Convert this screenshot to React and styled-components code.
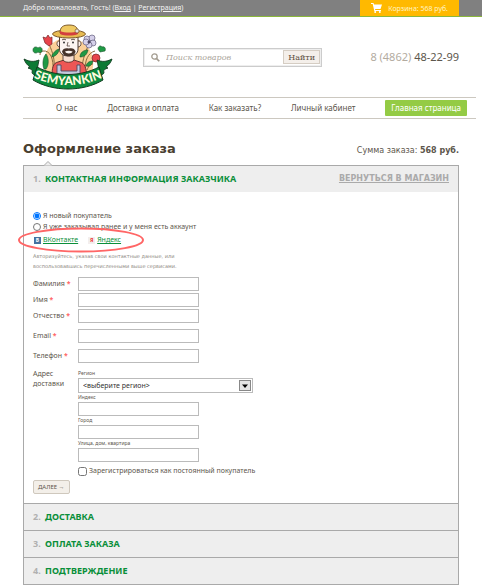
import React, { useState } from 'react';
import styled, { createGlobalStyle } from 'styled-components';

const menu = ['О нас', 'Доставка и оплата', 'Как заказать?', 'Личный кабинет'];

const person = [
  { id: 'surname', label: 'Фамилия' },
  { id: 'name', label: 'Имя' },
  { id: 'patronymic', label: 'Отчество' },
  { id: 'email', label: 'Email', spaced: true },
  { id: 'phone', label: 'Телефон', spaced: true },
];

const address = [
  { id: 'zip', label: 'Индекс' },
  { id: 'city', label: 'Город' },
  { id: 'street', label: 'Улица, дом, квартира' },
];

const nextSteps = ['Доставка', 'Оплата заказа', 'Подтверждение'];

function Logo() {
  return (
    <LogoSvg viewBox="0 0 90 66" role="img" aria-label="Semyankin">
      <path d="M22 48C18 30 27 14 45 14s29 16 24 34l-8 6H30z" fill="#fbcf98" />
      <g fill="none" stroke="#8a6a3c" strokeWidth="1">
        <path d="M31 46C32 36 30 29 26 20M30 47c1-12-3-21-10-20-2 0-3 2-3 4" />
        <path d="M59 44c1-10 3-15 7-24M62 46c0-10 3-17 10-19M64 46c2-5 4-6 6-6" />
      </g>
      <g fill="#1f9a45" stroke="#19532a" strokeWidth=".6">
        <path d="M10 26c0-3 3-4 5-2 2-2 5 0 4 3 0 2-3 2-4 1-2 2-5 1-5-2z" />
        <path d="M21 45c-2-5-1-12 2-15 3 4 3 11 0 15z" />
        <path d="M57 33c0-4 3-7 8-7-1 5-4 7-8 7zM63 42c1-4 4-5 7-5-1 4-3 6-7 5z" />
        <path d="M75 25c0-3 3-4 4-2 3-1 4 2 3 4l-5 1z" />
        <path d="M29 31c3-4 4-5 7-6 0 4-3 7-7 8z" />
      </g>
      <path d="M20 13l3 1 2-3 2 3 2-1v7l-3 2-4-3z" fill="#e8444a" stroke="#74272a" strokeWidth=".7" />
      <g fill="#d5d0ea" stroke="#635d7c" strokeWidth=".7">
        <circle cx="64" cy="15" r="3" />
        <circle cx="69" cy="14" r="3" />
        <circle cx="70" cy="19" r="3" />
        <circle cx="66" cy="21" r="3" />
        <circle cx="63" cy="18" r="3" />
      </g>
      <circle cx="66" cy="18" r="1.5" fill="#4c445e" />
      <circle cx="73" cy="34" r="4" fill="#e8444a" stroke="#74272a" strokeWidth=".7" />
      <path d="M29 52c0-8 1-13 6-14l6-2h10l6 2c5 1 6 6 7 14z" fill="#ed5755" stroke="#5b2d2a" strokeWidth=".9" />
      <path d="M34 41h4v6h16v-6h3v16H34z" fill="#c5c8dd" stroke="#4a4862" strokeWidth=".9" />
      <path d="M40 28h11v8c-2 3-9 3-11 0z" fill="#f7ddd0" stroke="#3d2b22" strokeWidth=".8" />
      <path d="M37 17c-4-1-4 6 0 6M55 17c4-1 4 6 0 6" fill="#fdeee6" stroke="#3d2b22" strokeWidth=".8" />
      <path d="M36.500 12h18.500v13c0 5-4 7-9.200 7s-9.300-2-9.300-7z" fill="#fdf5f1" stroke="#3d2b22" strokeWidth=".9" />
      <path d="M45.800 24.500c-3-1-6 0-6.800 3 1 3.500 3.500 4.800 6.800 4.800s5.800-1.300 6.800-4.800c-.8-3-3.800-4-6.800-3z" fill="#46332a" />
      <path d="M42 27.500c2-1 5.600-1 7.600 0-.8 2.600-6.800 2.600-7.600 0z" fill="#fdf5f1" />
      <path d="M45 18l-1 4h3" fill="none" stroke="#3d2b22" strokeWidth=".7" />
      <path d="M39 16c1-1 3-1 4 0M48 16c1-1 3-1 4 0" fill="none" stroke="#3d2b22" strokeWidth=".8" />
      <circle cx="41" cy="18.500" r=".9" fill="#222" />
      <circle cx="50" cy="18.500" r=".9" fill="#222" />
      <ellipse cx="46" cy="10" rx="16.500" ry="4" fill="#e7bb52" stroke="#6f4c1f" strokeWidth=".9" />
      <path d="M37 9c0-6 3-8 9-8s9 2 9 8c-4 2-14 2-18 0z" fill="#efc962" stroke="#6f4c1f" strokeWidth=".9" />
      <path d="M37 7c5 2 13 2 18 0v3c-5 2-13 2-18 0z" fill="#d33f3f" />
      <circle cx="54" cy="7" r="2" fill="#e6dede" stroke="#6f4c1f" strokeWidth=".6" />
      <path d="M1 35c6 3 10 3 15 1l-2 10 4 5c-5 1-9 0-9-3 1-2-1-3-4-4l2-1c-3-2-5-5-6-8z" fill="#0c7a34" stroke="#123d20" strokeWidth=".9" />
      <path d="M89 35c-6 3-10 3-15 1l2 10-4 5c5 1 9 0 9-3-1-2 1-3 4-4l-2-1c3-2 5-5 6-8z" fill="#0c7a34" stroke="#123d20" strokeWidth=".9" />
      <path d="M14 43c19 10 43 10 62 0l4 13C60 68 30 68 10 56z" fill="#0c8a3c" stroke="#123d20" strokeWidth="1" />
      <path id="ribbon" d="M11 54q34 14 68 0" fill="none" />
      <text fill="#fffbe0" fontFamily="Lato, sans-serif" fontWeight="900" fontSize="12">
        <textPath href="#ribbon" startOffset="50%" textAnchor="middle">SEMYANKIN</textPath>
      </text>
    </LogoSvg>
  );
}

export default function App() {
  const [buyer, setBuyer] = useState('new');

  return (
    <>
      <GlobalStyle />
      <TopBar>
        <span>
          Добро пожаловать, Гость! (<a href="#login">Вход</a> | <a href="#register">Регистрация</a>)
        </span>
        <Cart href="#cart">
          <svg width="11" height="10" viewBox="0 0 11 10" fill="#fff">
            <path d="M0 0h2.500l.5 1.500h8L9.500 6H4l.3 1H10v1H3.300L1.700 1H0z" />
            <circle cx="4.200" cy="9" r="1" />
            <circle cx="8.800" cy="9" r="1" />
          </svg>
          Корзина: 568 руб.
        </Cart>
      </TopBar>

      <Header>
        <a href="#home"><Logo /></a>
        <Search onSubmit={(e) => e.preventDefault()}>
          <svg width="9" height="9" viewBox="0 0 9 9" fill="none" stroke="#a39c90">
            <circle cx="3.500" cy="3.500" r="2.700" strokeWidth="1.300" />
            <path d="M5.600 5.600L8.300 8.300" strokeWidth="1.600" />
          </svg>
          <input type="text" placeholder="Поиск товаров" aria-label="Поиск товаров" />
          <button>Найти</button>
        </Search>
        <Phone>8 (4862) <b>48-22-99</b></Phone>
      </Header>

      <Nav>
        {menu.map((item) => <a key={item} href="#menu">{item}</a>)}
        <HomeLink href="#home">Главная страница</HomeLink>
      </Nav>

      <Main>
        <TitleRow>
          <h1>Оформление заказа</h1>
          <span>Сумма заказа: <b>568 руб.</b></span>
        </TitleRow>

        <Steps>
          <Notch width="8" height="5" viewBox="0 0 8 5">
            <path d="M0 4.500l4-4 4 4" fill="#eee" stroke="#a9a9a9" />
          </Notch>
          <StepHead>
            <h2><i>1.</i> Контактная информация заказчика</h2>
            <a href="#shop">Вернуться в магазин</a>
          </StepHead>

          <Form onSubmit={(e) => e.preventDefault()}>
            <Choice>
              <input type="radio" name="buyer" checked={buyer === 'new'} onChange={() => setBuyer('new')} />
              Я новый покупатель
            </Choice>
            <Choice>
              <input type="radio" name="buyer" checked={buyer === 'old'} onChange={() => setBuyer('old')} />
              Я уже заказывал ранее и у меня есть аккаунт
            </Choice>

            <Social>
              <a href="#vk"><Badge $bg="#45719f" $color="#fff">B</Badge><u>ВКонтакте</u></a>
              <a href="#yandex"><Badge $bg="#f3eeee" $color="#e33">Я</Badge><u>Яндекс</u></a>
              <Ring viewBox="0 0 128 26" preserveAspectRatio="none">
                <ellipse cx="64" cy="13" rx="62" ry="11.500" fill="none" stroke="#f66" strokeWidth="2" />
              </Ring>
            </Social>

            <Hint>
              Авторизуйтесь, указав свои контактные данные, или воспользовавшись перечисленными выше сервисами.
            </Hint>

            {person.map((f) => (
              <Field key={f.id} $spaced={f.spaced}>
                <label htmlFor={f.id}>{f.label} <sup>*</sup></label>
                <TextBox id={f.id} type="text" />
              </Field>
            ))}

            <Field $spaced $top>
              <label htmlFor="region">Адрес доставки</label>
              <Address>
                <SmallLabel htmlFor="region">Регион</SmallLabel>
                <SelectWrap>
                  <select id="region">
                    <option>&lt;выберите регион&gt;</option>
                  </select>
                  <svg width="12" height="11" viewBox="0 0 12 11">
                    <rect x=".5" y=".5" width="11" height="10" fill="#e4e4e4" stroke="#888" />
                    <path d="M3 4.500h6L6 8z" fill="#000" />
                  </svg>
                </SelectWrap>
                {address.map((f) => (
                  <React.Fragment key={f.id}>
                    <SmallLabel htmlFor={f.id}>{f.label}</SmallLabel>
                    <TextBox id={f.id} type="text" />
                  </React.Fragment>
                ))}
                <Check>
                  <input type="checkbox" />
                  Зарегистрироваться как постоянный покупатель
                </Check>
              </Address>
            </Field>

            <NextButton>ДАЛЕЕ →</NextButton>
          </Form>

          {nextSteps.map((title, i) => (
            <StepHead key={title} $closed>
              <h2><i>{i + 2}.</i> {title}</h2>
            </StepHead>
          ))}
        </Steps>
      </Main>
    </>
  );
}

const GlobalStyle = createGlobalStyle`
  * {
    box-sizing: border-box;
  }
  body {
    margin: 0;
    background: #fff;
    color: #5c564c;
    font: 7px/10px "Noto Sans", Verdana, sans-serif;
  }
  a {
    color: inherit;
  }
  h1, h2 {
    margin: 0;
  }
  input, select, button {
    font-family: inherit;
    color: inherit;
    margin: 0;
  }
`

const TopBar = styled.div`
  display: flex;
  justify-content: space-between;
  height: 17px;
  padding: 0 23px;
  background: #808080;
  border-bottom: 1px solid #8bb73c;
  color: #f4f4f4;
  line-height: 15px;
`

const Cart = styled.a`
  display: flex;
  align-items: center;
  gap: 6px;
  padding: 0 11px;
  background: #ffb900;
  color: #fff3c4;
  text-decoration: none;
`

const Header = styled.header`
  display: flex;
  align-items: center;
  height: 80px;
  padding: 0 23px;
`

const LogoSvg = styled.svg`
  display: block;
  width: 90px;
  height: 66px;
`

const Search = styled.form`
  display: flex;
  align-items: center;
  flex: 0 1 179px;
  height: 19px;
  margin-left: 30px;
  padding: 0 1px 0 7px;
  border: 1px solid #ccc;
  outline: 1px solid #eee;
  outline-offset: -2px;

  svg {
    flex: none;
  }
  input {
    flex: 1;
    min-width: 0;
    border: 0;
    padding: 0 6px;
    outline: none;
    background: none;
    font: italic 8px "DejaVu Serif", Georgia, serif;
  }
  input::placeholder {
    color: #aaa49a;
  }
  button {
    height: 14px;
    padding: 0 4px;
    border: 1px solid #d5cdc3;
    background: #f4efea;
    color: #5c4e40;
    font: 8px "DejaVu Serif", Georgia, serif;
  }
`

const Phone = styled.div`
  margin-left: auto;
  color: #b3ab9f;
  font: 11px/16px "Noto Sans", sans-serif;

  b {
    color: #5c564c;
    font-weight: 400;
  }
`

const Nav = styled.nav`
  display: flex;
  align-items: center;
  justify-content: space-between;
  height: 22px;
  margin: 0 6px 0 23px;
  padding: 0 9px 0 33px;
  border: solid #ccc8c0;
  border-width: 1px 0;
  font-size: 8px;

  a {
    text-decoration: none;
  }
`

const HomeLink = styled.a`
  padding: 0 6px;
  border-radius: 1px;
  background: #94cb45;
  color: #fff;
  line-height: 16px;
`

const Main = styled.main`
  padding: 22px 23px 3px;
`

const TitleRow = styled.div`
  display: flex;
  align-items: center;
  justify-content: space-between;
  height: 24px;
  font: 8px/10px "DejaVu Sans", Verdana, sans-serif;

  h1 {
    padding-bottom: 8px;
    color: #4a4030;
    font-size: 13px;
    line-height: 16px;
  }
  span {
    padding-bottom: 4px;
  }
`

const Steps = styled.section`
  position: relative;
  border: 1px solid #a9a9a9;
`

const Notch = styled.svg`
  position: absolute;
  top: -5px;
  left: 20px;
`

const StepHead = styled.div`
  display: flex;
  align-items: center;
  justify-content: space-between;
  height: ${(p) => (p.$closed ? '27px' : '26px')};
  padding: 0 9px;
  border-top: ${(p) => (p.$closed ? '1px solid #a9a9a9' : '0')};
  background: #eee;
  text-transform: uppercase;

  h2 {
    color: #0a8f3a;
    font-size: 9px;
    line-height: 12px;
  }
  i {
    margin-right: 2px;
    color: #b0b0b0;
    font-style: normal;
  }
  a {
    color: #aaa;
    font: 700 8px/12px "DejaVu Sans", Verdana, sans-serif;
  }
`

const Form = styled.form`
  padding: 18px 9px 9px;
`

const Choice = styled.label`
  display: flex;
  align-items: center;
  gap: 2px;
  height: 11px;

  input {
    width: 8px;
    height: 8px;
  }
`

const Social = styled.div`
  position: relative;
  display: flex;
  gap: 10px;
  width: 110px;
  padding: 3px 1px;
  color: #0a8f3a;

  a {
    display: flex;
    align-items: center;
    gap: 2px;
    text-decoration: none;
  }
`

const Badge = styled.span`
  width: 7px;
  height: 7px;
  background: ${(p) => p.$bg};
  color: ${(p) => p.$color};
  font-size: 5px;
  font-weight: 700;
  line-height: 7px;
  text-align: center;
`

const Ring = styled.svg`
  position: absolute;
  top: -5px;
  left: -16px;
  width: 128px;
  height: 26px;
  pointer-events: none;
`

const Hint = styled.p`
  width: 160px;
  margin: 3px 0 6px;
  color: #8c8880;
  font: 5px/10px "DejaVu Sans", Verdana, sans-serif;
`

const Field = styled.div`
  display: grid;
  grid-template-columns: 35px 1fr;
  gap: 10px;
  align-items: ${(p) => (p.$top ? 'start' : 'center')};
  margin-top: ${(p) => (p.$spaced ? '6px' : '2px')};

  > label {
    white-space: ${(p) => (p.$top ? 'normal' : 'nowrap')};
  }
  sup {
    color: #f66;
    font-size: 7px;
    font-weight: 700;
    line-height: 0;
    vertical-align: baseline;
  }
`

const TextBox = styled.input`
  display: block;
  width: 121px;
  height: 14px;
  padding: 0 4px;
  border: 1px solid #bbb;
  background: #fff;
  font-size: 7px;
`

const Address = styled.div`
  display: flex;
  flex-direction: column;
  align-items: flex-start;
`

const SmallLabel = styled.label`
  font-size: 5px;
  line-height: 9px;
`

const SelectWrap = styled.div`
  display: grid;
  align-items: center;
  width: 175px;

  select, svg {
    grid-area: 1 / 1;
  }
  select {
    appearance: none;
    height: 15px;
    padding: 0 4px;
    border: 1px solid #bbb;
    background: #fff;
    color: #333;
    font-size: 7px;
  }
  svg {
    justify-self: end;
    margin-right: 2px;
    pointer-events: none;
  }
`

const Check = styled.label`
  display: flex;
  align-items: center;
  gap: 2px;
  margin-top: 4px;

  input {
    width: 9px;
    height: 9px;
  }
`

const NextButton = styled.button`
  display: block;
  height: 14px;
  margin-top: 4px;
  padding: 0 4px;
  border: 1px solid #cfc8bd;
  border-radius: 2px;
  background: #f3efe9;
  font-size: 6px;
`
